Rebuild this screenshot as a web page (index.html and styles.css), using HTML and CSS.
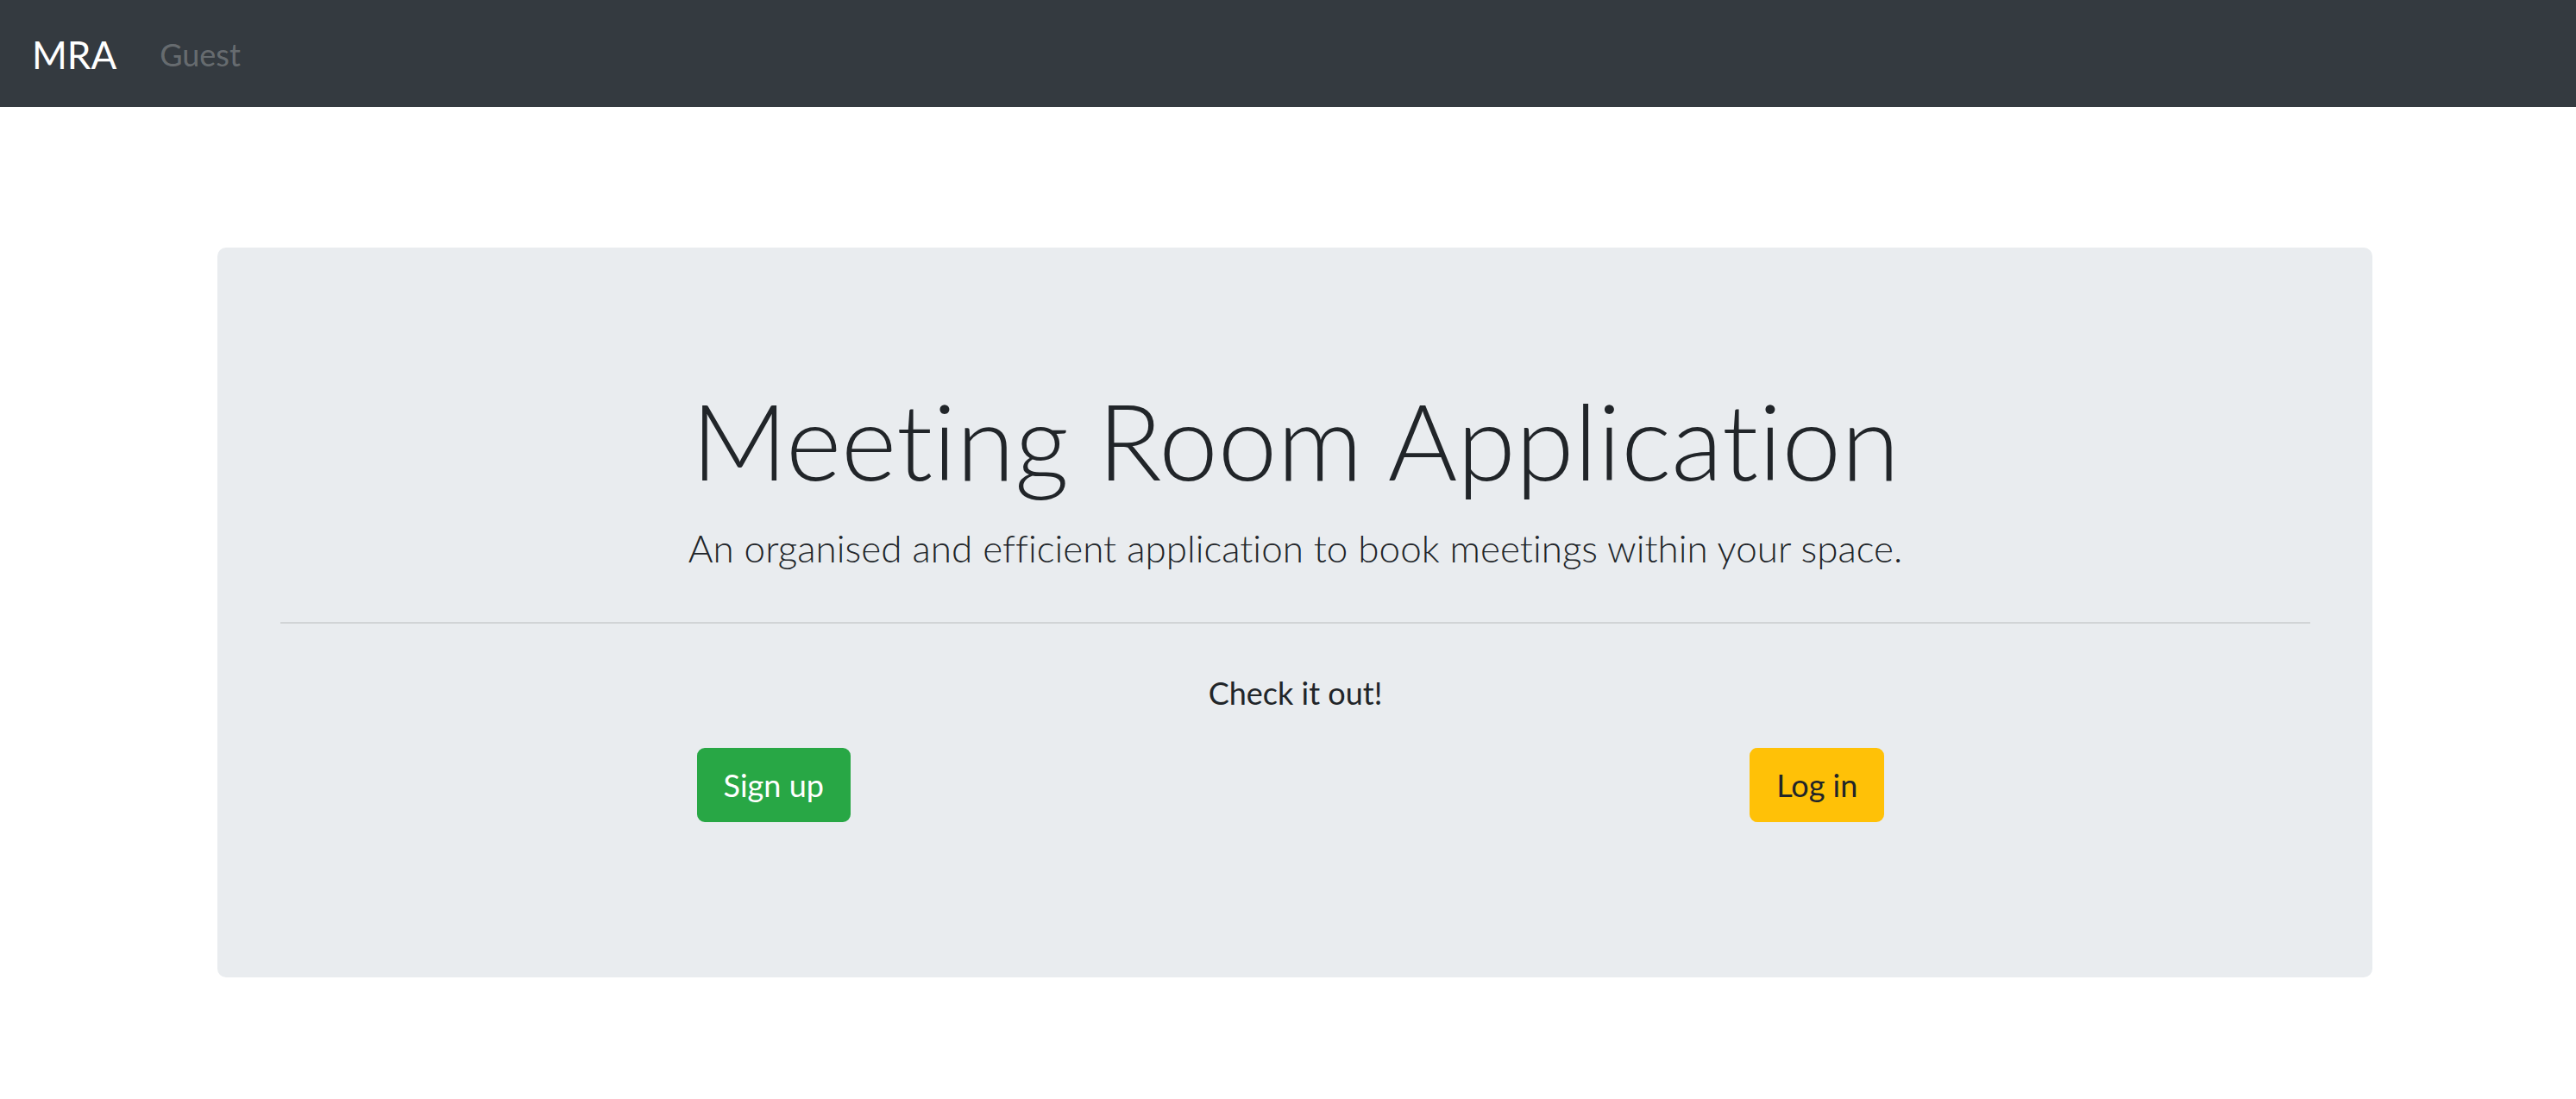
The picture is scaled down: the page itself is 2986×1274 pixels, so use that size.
FILE: index.html
```html
<!DOCTYPE html>
<html lang="en">
<head>
<meta charset="utf-8">
<title>MRA</title>
<link rel="stylesheet" href="styles.css">
</head>
<body>
<nav class="navbar">
  <a class="brand" href="#">MRA</a>
  <span class="nav-link">Guest</span>
</nav>
<main class="page">
  <section class="jumbotron">
    <h1 class="display">Meeting Room Application</h1>
    <p class="lead">An organised and efficient application to book meetings within your space.</p>
    <hr class="divider">
    <p class="check">Check it out!</p>
    <div class="row">
      <div class="col"><a class="btn btn-success" href="#">Sign up</a></div>
      <div class="col"><a class="btn btn-warning" href="#">Log in</a></div>
    </div>
  </section>
</main>
</body>
</html>
```

FILE: styles.css
```css
html, body {
  margin: 0;
  padding: 0;
  background: #ffffff;
}
body {
  font-family: Lato, "Open Sans", "Liberation Sans", sans-serif;
  font-variant-ligatures: none;
  font-feature-settings: "liga" 0, "clig" 0;
  color: #212529;
}
.navbar {
  height: 124px;
  background: #343a40;
  display: flex;
  align-items: center;
  padding: 2px 0 0 37px;
  box-sizing: border-box;
}
.brand {
  color: #ffffff;
  text-decoration: none;
  font-size: 44px;
  line-height: 1.5;
  font-weight: 400;
  margin-right: 50px;
}
.nav-link {
  color: rgba(255, 255, 255, 0.27);
  font-size: 36px;
  line-height: 1.5;
}
.page {
  padding: 163px 0 0 252px;
}
.jumbotron {
  width: 2498px;
  box-sizing: border-box;
  background: #e9ecef;
  border-radius: 10px;
  padding: 149px 72px 145px 73px;
  text-align: center;
}
.display {
  margin: 0 0 18px 0;
  font-size: 123px;
  line-height: 1.2;
  font-weight: 300;
}
.lead {
  margin: 0;
  font-size: 44px;
  line-height: 1.5;
  font-weight: 300;
}
.divider {
  margin: 53px 0 53px 0;
  border: 0;
  border-top: 2px solid rgba(0, 0, 0, 0.1);
  height: 0;
}
.check {
  margin: 0 0 37px 0;
  font-size: 36px;
  line-height: 1.5;
}
.row {
  display: flex;
  margin: 0 -33px 35px -33px;
}
.col {
  flex: 1 1 0;
  text-align: center;
}
.btn {
  display: inline-block;
  font-size: 36px;
  line-height: 54px;
  padding: 14px 29px;
  border: 2px solid transparent;
  border-radius: 9px;
  text-decoration: none;
}
.btn-success {
  background: #28a745;
  border-color: #28a745;
  color: #ffffff;
}
.btn-warning {
  background: #ffc107;
  border-color: #ffc107;
  color: #212529;
}
```
